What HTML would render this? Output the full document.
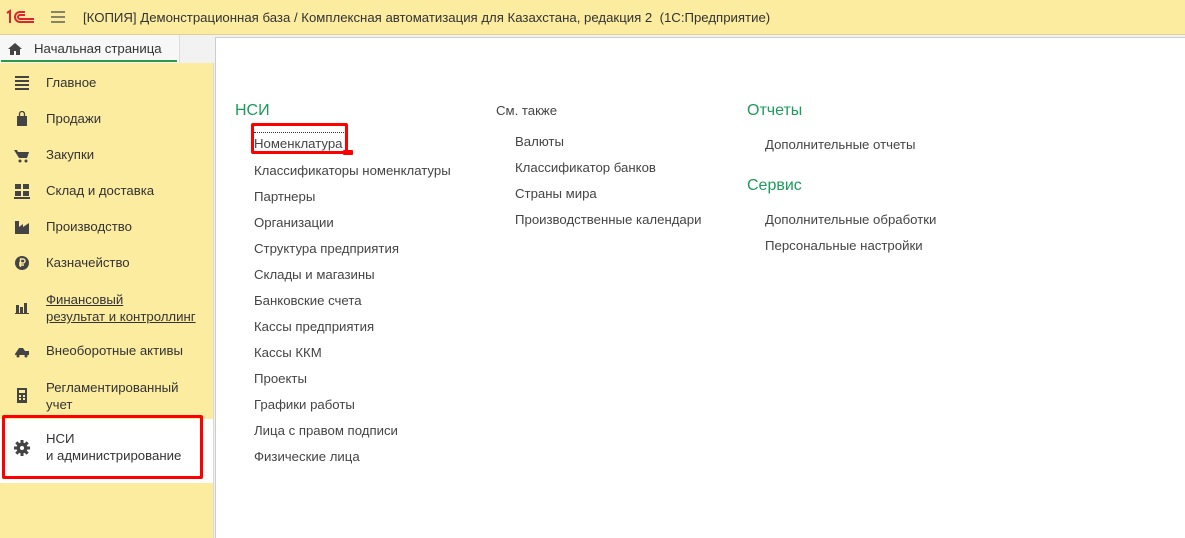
<!DOCTYPE html>
<html><head><meta charset="utf-8"><style>
*{margin:0;padding:0;box-sizing:border-box}
body{width:1185px;height:538px;overflow:hidden;font-family:"Liberation Sans",sans-serif;font-size:13.2px;color:#333;background:#f2f2f2;position:relative}
.title{position:absolute;left:0;top:0;width:1185px;height:35px;background:#fbeca0;border-bottom:1px solid #e0d28a}
.title .t{position:absolute;left:83px;top:10px;font-size:13.2px;color:#333}
.side{position:absolute;left:0;top:63px;width:214px;height:475px;background:#fbeca0;border-right:1px solid #d8d8d8}
.tab{position:absolute;left:0;top:35px;width:180px;height:28px;background:#f7f7f7;border-right:1px solid #ddd}
.tab .u{position:absolute;left:1px;right:2px;bottom:1px;height:2px;background:#2a9a4a}
.content{position:absolute;left:215px;top:37px;width:970px;height:501px;background:#fff;border-left:1px solid #ccc;border-top:1px solid #ccc}
.it{position:absolute;left:46px;font-size:13.2px;color:#333}
.ic{position:absolute;left:14px;width:16px;height:16px}
.a{position:absolute;font-size:13.2px;color:#444}
.h{position:absolute;font-size:16px;color:#1a9c5a}
</style></head><body>
<div class="title">
<svg style="position:absolute;left:5px;top:9px" width="32" height="16" viewBox="0 0 32 16"><g fill="none" stroke="#d8282d" stroke-width="2"><path d="M2 4l3-2v12"/><path d="M20 3h-5a5 5 0 0 0 0 10h14"/><path d="M20 6h-5a2 2 0 0 0 0 4h14"/></g></svg>
<svg style="position:absolute;left:50px;top:11px" width="16" height="12"><g stroke="#444" stroke-width="1.3"><path d="M1 1h14M1 6h14M1 11h14"/></g></svg>
<div class="t">[КОПИЯ] Демонстрационная база / Комплексная автоматизация для Казахстана, редакция 2 &nbsp;(1С:Предприятие)</div>
</div>
<div class="tab">
<svg style="position:absolute;left:8px;top:8px" width="14" height="12" viewBox="0 0 14 12"><path d="M7 0L0 6h2v6h4V8h2v4h4V6h2z" fill="#444"/></svg>
<div style="position:absolute;left:34px;top:6px;color:#333">Начальная страница</div>
<div class="u"></div>
</div>
<div class="side">
<svg class="ic" style="top:12px" viewBox="0 0 16 16"><g stroke="#444" stroke-width="2"><path d="M1 2h14M1 6h14M1 10h14M1 14h14"/></g></svg>
<div class="it" style="top:12px">Главное</div>
<svg class="ic" style="top:48px" viewBox="0 0 16 16"><path d="M3 5h10v10H3z" fill="#444"/><path d="M5.5 6V3a2.5 2.5 0 0 1 5 0v3" stroke="#444" fill="none" stroke-width="1.3"/></svg>
<div class="it" style="top:48px">Продажи</div>
<svg class="ic" style="top:84px" viewBox="0 0 16 16"><path d="M0 3h3l1 2h11l-2 6H5z" fill="#444"/><circle cx="6" cy="14" r="1.5" fill="#444"/><circle cx="12" cy="14" r="1.5" fill="#444"/></svg>
<div class="it" style="top:84px">Закупки</div>
<svg class="ic" style="top:120px" viewBox="0 0 16 16"><path d="M1 1h6v5H1zM9 1h6v5H9zM1 8h6v5H1zM9 8h6v5H9zM0 14h16v2H0z" fill="#444"/></svg>
<div class="it" style="top:120px">Склад и доставка</div>
<svg class="ic" style="top:156px" viewBox="0 0 16 16"><path d="M1 15V2h4v6l4-3v3l6-4v11z" fill="#444"/></svg>
<div class="it" style="top:156px">Производство</div>
<svg class="ic" style="top:192px" viewBox="0 0 16 16"><circle cx="8" cy="8" r="7" fill="#444"/><path d="M6.5 12V4h2.5a2 2 0 0 1 0 4H5M5 10h5" stroke="#fbeca0" fill="none" stroke-width="1.4"/></svg>
<div class="it" style="top:192px">Казначейство</div>
<svg class="ic" style="top:236px" viewBox="0 0 16 16"><path d="M2 6h3v8H2zM6 8h3v6H6zM10 4h3v10h-3zM1 14h14v1H1z" fill="#444"/></svg>
<div class="it" style="top:228px;line-height:17px;text-decoration:underline">Финансовый<br>результат и контроллинг</div>
<svg class="ic" style="top:280px" viewBox="0 0 16 16"><path d="M1 11l4-6h4l2 3h4v4H1z" fill="#444"/><circle cx="4" cy="13" r="1.5" fill="#444"/><circle cx="12" cy="13" r="1.5" fill="#444"/></svg>
<div class="it" style="top:280px">Внеоборотные активы</div>
<svg class="ic" style="top:324px" viewBox="0 0 16 16"><path d="M3 1h10v15H3z" fill="#444"/><path d="M5 3h6v3H5z" fill="#fbeca0"/><g fill="#fbeca0"><rect x="5" y="8" width="2" height="2"/><rect x="9" y="8" width="2" height="2"/><rect x="5" y="11" width="2" height="2"/><rect x="9" y="11" width="2" height="2"/></g></svg>
<div class="it" style="top:316px;line-height:17px">Регламентированный<br>учет</div>
<div style="position:absolute;left:0;top:356px;width:213px;height:64px;background:#fff"></div>
<div style="position:absolute;left:2px;top:352px;width:201px;height:64px;border:3px solid #f00;border-radius:2px"></div>
<svg class="ic" style="top:377px" viewBox="0 0 16 16"><circle cx="8" cy="8" r="5.5" fill="#444"/><g stroke="#444" stroke-width="3"><path d="M8 0v16M0 8h16M2.3 2.3l11.4 11.4M13.7 2.3L2.3 13.7"/></g><circle cx="8" cy="8" r="2" fill="#fff"/></svg>
<div class="it" style="top:367px;line-height:17px">НСИ<br>и администрирование</div>
</div>
<div class="content"></div>
<div class="h" style="left:235px;top:102px">НСИ</div>
<div style="position:absolute;left:251px;top:123px;width:97px;height:31px;border:3px solid #f00;border-radius:2px"></div>
<div style="position:absolute;left:343px;top:150px;width:10px;height:5px;background:#f00;border-radius:1px"></div>
<div style="position:absolute;left:254px;top:132px;width:90px;border-top:1px dotted #333"></div>
<div class="a" style="left:254px;top:136px">Номенклатура</div>
<div class="a" style="left:254px;top:163px">Классификаторы номенклатуры</div>
<div class="a" style="left:254px;top:189px">Партнеры</div>
<div class="a" style="left:254px;top:215px">Организации</div>
<div class="a" style="left:254px;top:241px">Структура предприятия</div>
<div class="a" style="left:254px;top:267px">Склады и магазины</div>
<div class="a" style="left:254px;top:293px">Банковские счета</div>
<div class="a" style="left:254px;top:319px">Кассы предприятия</div>
<div class="a" style="left:254px;top:345px">Кассы ККМ</div>
<div class="a" style="left:254px;top:371px">Проекты</div>
<div class="a" style="left:254px;top:397px">Графики работы</div>
<div class="a" style="left:254px;top:423px">Лица с правом подписи</div>
<div class="a" style="left:254px;top:449px">Физические лица</div>
<div class="a" style="left:496px;top:103px">См. также</div>
<div class="a" style="left:515px;top:134px">Валюты</div>
<div class="a" style="left:515px;top:160px">Классификатор банков</div>
<div class="a" style="left:515px;top:186px">Страны мира</div>
<div class="a" style="left:515px;top:212px">Производственные календари</div>
<div class="h" style="left:747px;top:102px">Отчеты</div>
<div class="a" style="left:765px;top:137px">Дополнительные отчеты</div>
<div class="h" style="left:747px;top:177px">Сервис</div>
<div class="a" style="left:765px;top:212px">Дополнительные обработки</div>
<div class="a" style="left:765px;top:238px">Персональные настройки</div>
</body></html>
